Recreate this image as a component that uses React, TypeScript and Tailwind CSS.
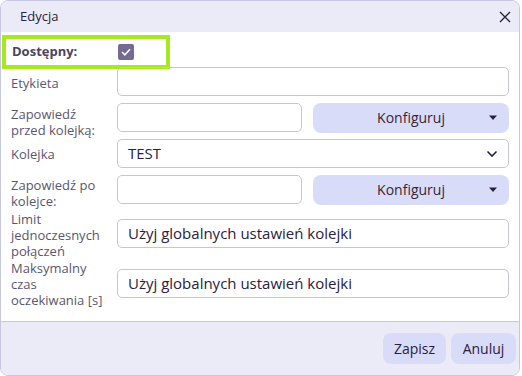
import React from "react";

const font = { fontFamily: '"Open Sans", "Liberation Sans", sans-serif' };

function Caret() {
    return (
        <svg width="10" height="6" viewBox="0 0 10 6" className="absolute right-[11px] top-1/2 -translate-y-1/2">
            <path d="M1 0.5h8L5 5z" fill="#2a2140" />
        </svg>
    );
}

function ConfigButton() {
    return (
        <button className="relative h-[30px] flex-1 rounded-lg bg-[#d9dcf8] text-[14px] text-[#3a1f3a]">
            Konfiguruj
            <Caret />
        </button>
    );
}

// label offset is relative to the input's top edge
function Row({ label, offset, className, children }: { label: React.ReactNode; offset: string; className: string; children: React.ReactNode }) {
    return (
        <div className={`flex h-[29px] items-start ${className}`}>
            <div className={`w-[106px] shrink-0 text-[13px] leading-[16px] text-[#5b5670] ${offset}`}>{label}</div>
            <div className="flex h-full flex-1 items-center">{children}</div>
        </div>
    );
}

export default function App() {
    return (
        <div className="w-[522px] h-[376px] bg-white" style={font}>
            <div className="flex h-full w-[520px] flex-col overflow-hidden rounded-lg border border-[#c7c6e3]">
                <div className="flex h-[31px] shrink-0 items-center justify-between bg-[#ebebf7] pl-[19px] pr-[8px]">
                    <span className="text-[13px] text-[#2a2140]">Edycja</span>
                    <svg width="12" height="12" viewBox="0 0 12 12">
                        <path d="M1 1l10 10M11 1L1 11" stroke="#2a2140" strokeWidth="1.4" />
                    </svg>
                </div>

                <div className="flex flex-1 flex-col px-[10px] pt-[3px]">
                    <div className="-ml-[9px] flex h-[34px] w-[168px] items-center border-[4px] border-[#a6ea1e] pl-[6px]">
                        <span className="w-[106px] text-[13px] font-bold text-[#4a4560]">Dostępny:</span>
                        <span className="flex h-[16px] w-[16px] items-center justify-center rounded-[2px] bg-[#776a92]">
                            <svg width="10" height="8" viewBox="0 0 10 8">
                                <path d="M1 4l2.8 2.8L9 1.2" stroke="white" strokeWidth="1.5" fill="none" />
                            </svg>
                        </span>
                    </div>

                    <Row label="Etykieta" offset="mt-[8px]" className="mt-[-2px]">
                        <div className="h-full flex-1 rounded-[5px] border border-[#c4c3e0]" />
                    </Row>

                    <Row
                        label={<>Zapowiedź<br />przed kolejką:</>}
                        offset="mt-[3px]"
                        className="mt-[7px]"
                    >
                        <div className="flex flex-1 items-center gap-[11px]">
                            <div className="h-[29px] w-[185px] rounded-[5px] border border-[#c4c3e0]" />
                            <ConfigButton />
                        </div>
                    </Row>

                    <Row label="Kolejka" offset="mt-[7px]" className="mt-[7px]">
                        <div className="relative flex h-full flex-1 items-center rounded-[5px] border border-[#c4c3e0] pl-[10px] text-[15px] text-[#2a2140]">
                            TEST
                            <svg width="12" height="8" viewBox="0 0 12 8" className="absolute right-[10px]">
                                <path d="M1.5 1.5L6 6l4.5-4.5" stroke="#2a2140" strokeWidth="1.6" fill="none" />
                            </svg>
                        </div>
                    </Row>

                    <Row
                        label={<>Zapowiedź po<br />kolejce:</>}
                        offset="mt-[2px]"
                        className="mt-[7px]"
                    >
                        <div className="flex flex-1 items-center gap-[11px]">
                            <div className="h-[29px] w-[185px] rounded-[5px] border border-[#c4c3e0]" />
                            <ConfigButton />
                        </div>
                    </Row>

                    <Row
                        label={<>Limit<br />jednoczesnych<br />połączeń</>}
                        offset="mt-[-8px]"
                        className="mt-[15px]"
                    >
                        <div className="flex h-full flex-1 items-center rounded-[5px] border border-[#c4c3e0] pl-[10px] text-[15px] text-[#2a2140]">
                            Użyj globalnych ustawień kolejki
                        </div>
                    </Row>

                    <Row
                        label={<>Maksymalny<br />czas<br />oczekiwania [s]</>}
                        offset="mt-[-9px]"
                        className="mt-[21px]"
                    >
                        <div className="flex h-full flex-1 items-center rounded-[5px] border border-[#c4c3e0] pl-[10px] text-[15px] text-[#2a2140]">
                            Użyj globalnych ustawień kolejki
                        </div>
                    </Row>
                </div>

                <div className="flex h-[54px] shrink-0 items-center justify-end gap-[5px] border-t border-[#c7c6e3] bg-[#ebebf7] pr-[3px]">
                    <button className="h-[31px] w-[63px] rounded-lg bg-[#d9dcf8] text-[14px] text-[#2a2140]">Zapisz</button>
                    <button className="h-[31px] w-[65px] rounded-lg bg-[#d9dcf8] text-[14px] text-[#2a2140]">Anuluj</button>
                </div>
            </div>
        </div>
    );
}
